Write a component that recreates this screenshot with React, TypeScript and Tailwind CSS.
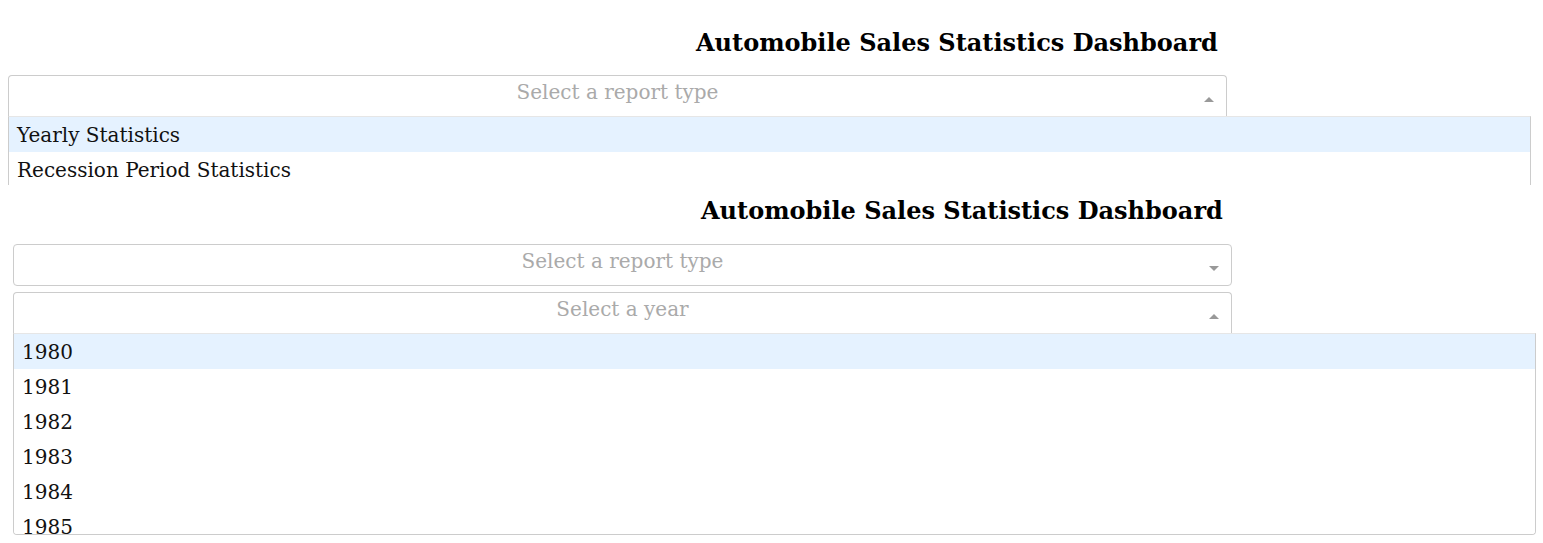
const reportTypes = ['Yearly Statistics', 'Recession Period Statistics']
const years = ['1980', '1981', '1982', '1983', '1984', '1985']

function Arrow({ open }: { open: boolean }) {
  return open ? (
    <span className="block w-0 h-0 border-x-[5px] border-x-transparent border-b-[5px] border-b-[#999]" />
  ) : (
    <span className="block w-0 h-0 border-x-[5px] border-x-transparent border-t-[5px] border-t-[#999]" />
  )
}

interface DropdownProps {
  placeholder: string
  open?: boolean
  options?: string[]
}

function Dropdown({ placeholder, open = false, options = [] }: DropdownProps) {
  return (
    <div className="relative">
      <div
        className={[
          'w-[1219px] flex items-start bg-white border-[#ccc]',
          open ? 'h-[41px] border-t border-x rounded-t-[4px]' : 'h-[42px] border rounded-[4px]',
        ].join(' ')}
      >
        <div className="flex-1 text-center leading-[32px] text-[20px] text-[#aaa] pl-[37px]">{placeholder}</div>
        <div className="w-[25px] pt-[21px] flex justify-end pr-[12px] box-content">
          <Arrow open={open} />
        </div>
      </div>
      {open && (
        <div className="w-[1523px] max-h-[202px] overflow-hidden bg-white border-x border-b border-[#ccc] border-t border-t-[#e6e6e6] rounded-b-[4px]">
          {options.map((o, i) => (
            <div
              key={o}
              className={[
                'h-[35px] leading-[37px] pl-[8px] text-[20px] text-[#111] whitespace-nowrap',
                i === 0 ? 'bg-[#e5f2ff]' : 'bg-white',
              ].join(' ')}
            >
              {o}
            </div>
          ))}
        </div>
      )}
    </div>
  )
}

function Title() {
  return (
    <h1 className="pl-[688px] text-[24px] leading-[30px] font-bold text-black whitespace-nowrap">
      Automobile Sales Statistics Dashboard
    </h1>
  )
}

export default function App() {
  return (
    <div className="w-[1543px] h-[543px] overflow-hidden bg-white" style={{ fontFamily: '"DejaVu Serif", serif' }}>
      {/* first capture: report type menu open */}
      <div className="h-[185px] overflow-hidden px-[8px] pt-[28px]">
        <Title />
        <div className="mt-[17px]">
          <Dropdown placeholder="Select a report type" open options={reportTypes} />
        </div>
      </div>

      {/* second capture: year menu open */}
      <div className="h-[358px] overflow-hidden px-[13px] pt-[11px]">
        <Title />
        <div className="mt-[18px] flex flex-col gap-[6px]">
          <Dropdown placeholder="Select a report type" />
          <Dropdown placeholder="Select a year" open options={years} />
        </div>
      </div>
    </div>
  )
}
